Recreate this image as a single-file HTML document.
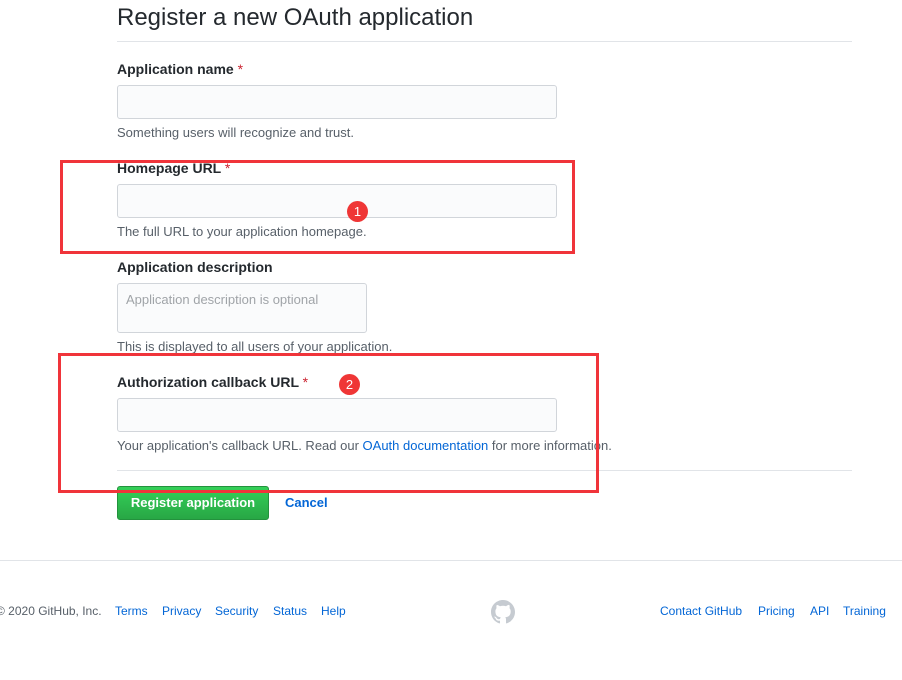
<!DOCTYPE html>
<html><head><meta charset="utf-8"><style>
*{margin:0;padding:0;box-sizing:border-box}
body{width:902px;height:680px;background:#fff;font-family:"Liberation Sans",sans-serif;color:#24292e;position:relative;overflow:hidden}
.a{position:absolute;white-space:nowrap}
.lbl{font-size:14px;font-weight:bold;line-height:18px}
.lbl span{color:#cb2431;font-weight:normal}
.note{font-size:13px;color:#586069;line-height:16px}
.inp{position:absolute;background:#fafbfc;border:1px solid #d1d5da;border-radius:3px}
.red{position:absolute;border:3px solid #f0343a}
.badge{position:absolute;width:21px;height:21px;border-radius:50%;background:#ef3636;color:#fff;font-size:13px;text-align:center;line-height:21px}
.ft{font-size:12px;color:#0366d6;top:604px}
</style></head><body>
<div class="a" style="left:117px;top:3px;font-size:24px;line-height:30px">Register a new OAuth application</div>
<div class="a" style="left:117px;top:41px;width:735px;height:1px;background:#e1e4e8"></div>

<div class="a lbl" style="left:117px;top:60px">Application name <span>*</span></div>
<div class="inp" style="left:117px;top:85px;width:440px;height:34px"></div>
<div class="a note" style="left:117px;top:125px">Something users will recognize and trust.</div>

<div class="a lbl" style="left:117px;top:159px">Homepage URL <span>*</span></div>
<div class="inp" style="left:117px;top:184px;width:440px;height:34px"></div>
<div class="a note" style="left:117px;top:224px">The full URL to your application homepage.</div>

<div class="a lbl" style="left:117px;top:258px">Application description</div>
<div class="inp" style="left:117px;top:283px;width:250px;height:50px"></div>
<div class="a" style="left:126px;top:292px;font-size:13px;color:#a0a4a8">Application description is optional</div>
<div class="a note" style="left:117px;top:339px">This is displayed to all users of your application.</div>

<div class="a lbl" style="left:117px;top:373px">Authorization callback URL <span>*</span></div>
<div class="inp" style="left:117px;top:398px;width:440px;height:34px"></div>
<div class="a note" style="left:117px;top:438px">Your application's callback URL. Read our <span style="color:#0366d6">OAuth documentation</span> for more information.</div>

<div class="a" style="left:117px;top:470px;width:735px;height:1px;background:#e1e4e8"></div>
<div class="a" style="left:117px;top:486px;width:152px;height:34px;border-radius:3px;background:linear-gradient(#34d058,#28a745);border:1px solid #23923d;color:#fff;font-size:13px;font-weight:bold;text-align:center;line-height:32px">Register application</div>
<div class="a" style="left:285px;top:495px;font-size:13px;font-weight:bold;color:#0366d6">Cancel</div>

<div class="red" style="left:60px;top:160px;width:515px;height:94px"></div>
<div class="red" style="left:58px;top:353px;width:541px;height:140px"></div>
<div class="badge" style="left:347px;top:201px">1</div>
<div class="badge" style="left:339px;top:374px">2</div>

<div class="a" style="left:0;top:560px;width:902px;height:1px;background:#e1e4e8"></div>
<div class="a" style="left:-4px;top:604px;font-size:12px;color:#586069">© 2020 GitHub, Inc.</div>
<div class="a ft" style="left:115px">Terms</div>
<div class="a ft" style="left:162px">Privacy</div>
<div class="a ft" style="left:215px">Security</div>
<div class="a ft" style="left:273px">Status</div>
<div class="a ft" style="left:321px">Help</div>
<svg class="a" style="left:491px;top:600px" width="24" height="24" viewBox="0 0 16 16"><path fill="#c6cbd1" d="M8 0C3.58 0 0 3.58 0 8c0 3.54 2.29 6.53 5.47 7.59.4.07.55-.17.55-.38 0-.19-.01-.82-.01-1.49-2.01.37-2.530-.49-2.69-.94-.09-.23-.48-.94-.82-1.13-.28-.15-.68-.52-.01-.53.63-.01 1.08.58 1.23.82.72 1.21 1.87.87 2.33.66.07-.52.28-.87.51-1.07-1.78-.2-3.64-.89-3.64-3.95 0-.87.31-1.59.82-2.15-.08-.2-.36-1.02.08-2.12 0 0 .67-.21 2.2.82.64-.18 1.32-.27 2-.27.68 0 1.36.09 2 .27 1.53-1.04 2.2-.82 2.2-.82.44 1.1.16 1.92.08 2.12.51.56.82 1.27.82 2.15 0 3.07-1.87 3.75-3.65 3.95.29.25.54.73.54 1.48 0 1.07-.01 1.93-.01 2.2 0 .21.15.46.55.38A8.013 8.013 0 0016 8c0-4.42-3.58-8-8-8z"/></svg>
<div class="a ft" style="left:660px">Contact GitHub</div>
<div class="a ft" style="left:758px">Pricing</div>
<div class="a ft" style="left:810px">API</div>
<div class="a ft" style="left:843px">Training</div>
</body></html>
